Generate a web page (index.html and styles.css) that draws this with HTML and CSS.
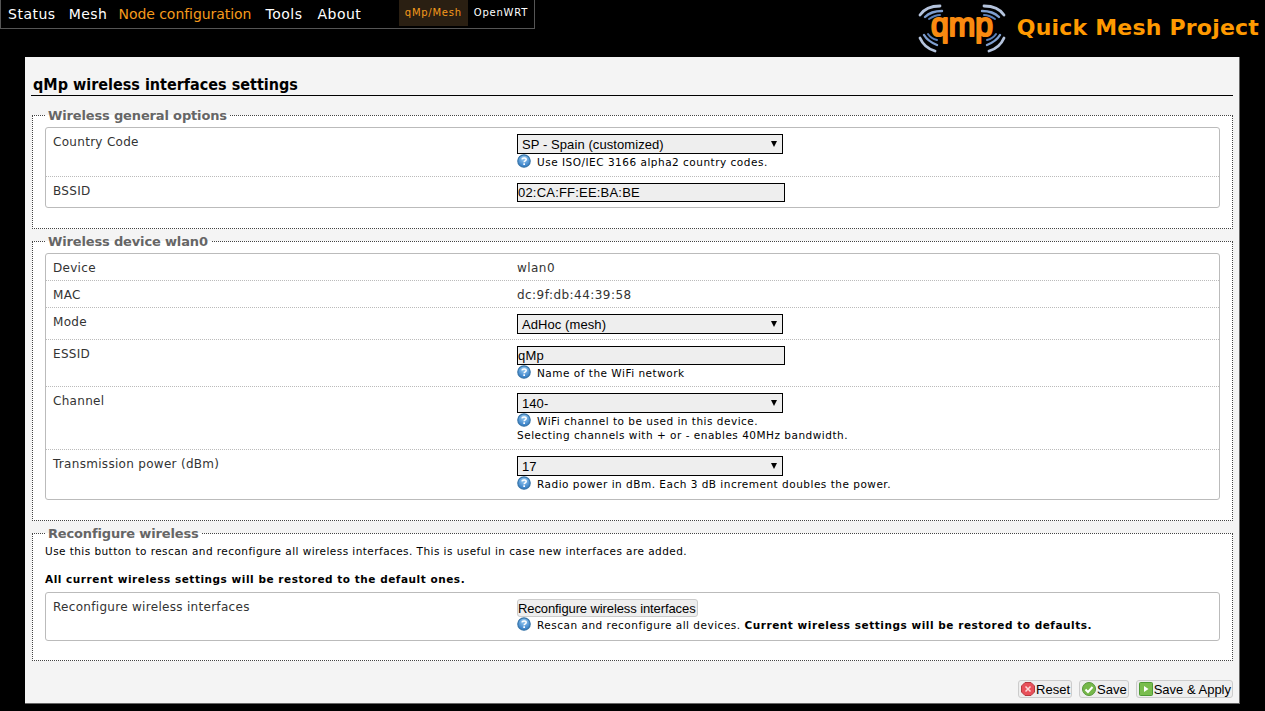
FILE: index.html
```html
<!DOCTYPE html>
<html lang="en">
<head>
<meta charset="utf-8">
<title>qMp wireless interfaces settings</title>
<link rel="stylesheet" href="styles.css">
</head>
<body>
<svg class="defs" width="0" height="0" aria-hidden="true">
  <defs>
    <radialGradient id="helpg" cx="50%" cy="30%" r="70%"><stop offset="0" stop-color="#9ccdf2"/><stop offset="1" stop-color="#2c78c4"/></radialGradient>
    <symbol id="help" viewBox="0 0 14 14">
      <circle cx="7" cy="7" r="6.2" fill="url(#helpg)" stroke="#3a76a8" stroke-width="1.2"/>
      <path d="M4.900 5.400C5.200 3.700 9.200 3.600 9.200 5.600 9.200 6.900 7.100 6.800 7.100 8.300" fill="none" stroke="#fff" stroke-width="1.5"/>
      <rect x="6.300" y="9.300" width="1.700" height="1.700" fill="#fff"/>
    </symbol>
  </defs>
</svg>
<header class="top">
  <nav class="menu">
    <ul class="menu-main">
      <li>Status</li><li>Mesh</li><li class="on">Node configuration</li><li>Tools</li><li>About</li>
    </ul>
    <ul class="menu-mode">
      <li class="on">qMp/Mesh</li><li>OpenWRT</li>
    </ul>
  </nav>
  <div class="brand">
    <svg class="logo" width="100" height="54" viewBox="0 0 100 54" aria-hidden="true">
      <g fill="none" stroke-linecap="round">
        <path d="M8 14C12 8 19 5 28 5" stroke="#b4c3dc" stroke-width="2.800"/>
        <path d="M13 16C17 12 23 10 30 10" stroke="#7f9fd0" stroke-width="2.400"/>
        <path d="M17 18C20 16 24 14 28 14" stroke="#5a7fb8" stroke-width="2"/>
        <path d="M8 37C11 44 16 48 23 50" stroke="#b4c3dc" stroke-width="2.800"/>
        <path d="M12 34C15 39 20 42 25 44" stroke="#7f9fd0" stroke-width="2.400"/>
        <path d="M16 33C18 36 21 38 25 39" stroke="#5a7fb8" stroke-width="2"/>
        <path d="M92 14C88 8 81 5 72 5" stroke="#b4c3dc" stroke-width="2.800"/>
        <path d="M87 16C83 12 77 10 70 10" stroke="#7f9fd0" stroke-width="2.400"/>
        <path d="M83 18C80 16 76 14 72 14" stroke="#5a7fb8" stroke-width="2"/>
        <path d="M92 37C89 44 84 48 77 50" stroke="#b4c3dc" stroke-width="2.800"/>
        <path d="M88 34C85 39 80 42 75 44" stroke="#7f9fd0" stroke-width="2.400"/>
        <path d="M84 33C82 36 79 38 75 39" stroke="#5a7fb8" stroke-width="2"/>
      </g>
      <text x="19" y="35" textLength="62" lengthAdjust="spacingAndGlyphs" class="logo-text">qmp</text>
    </svg>
    <span class="brand-name">Quick Mesh Project</span>
  </div>
</header>

<main class="page">
  <h2 class="title">qMp wireless interfaces settings</h2>

  <fieldset class="group">
    <legend>Wireless general options</legend>
    <div class="rows">
      <div class="row">
        <div class="label">Country Code</div>
        <div class="field">
          <div class="select"><span>SP - Spain (customized)</span><i class="arrow"></i></div>
          <p class="hint"><svg class="help"><use href="#help"/></svg>Use ISO/IEC 3166 alpha2 country codes.</p>
        </div>
      </div>
      <div class="row">
        <div class="label">BSSID</div>
        <div class="field"><div class="input">02:CA:FF:EE:BA:BE</div></div>
      </div>
    </div>
  </fieldset>

  <fieldset class="group">
    <legend>Wireless device wlan0</legend>
    <div class="rows">
      <div class="row plain"><div class="label">Device</div><div class="field value">wlan0</div></div>
      <div class="row plain"><div class="label">MAC</div><div class="field value">dc:9f:db:44:39:58</div></div>
      <div class="row">
        <div class="label">Mode</div>
        <div class="field"><div class="select"><span>AdHoc (mesh)</span><i class="arrow"></i></div></div>
      </div>
      <div class="row">
        <div class="label">ESSID</div>
        <div class="field">
          <div class="input">qMp</div>
          <p class="hint"><svg class="help"><use href="#help"/></svg>Name of the WiFi network</p>
        </div>
      </div>
      <div class="row">
        <div class="label">Channel</div>
        <div class="field">
          <div class="select"><span>140-</span><i class="arrow"></i></div>
          <p class="hint"><svg class="help"><use href="#help"/></svg>WiFi channel to be used in this device.<br>Selecting channels with + or - enables 40MHz bandwidth.</p>
        </div>
      </div>
      <div class="row">
        <div class="label">Transmission power (dBm)</div>
        <div class="field">
          <div class="select"><span>17</span><i class="arrow"></i></div>
          <p class="hint"><svg class="help"><use href="#help"/></svg>Radio power in dBm. Each 3 dB increment doubles the power.</p>
        </div>
      </div>
    </div>
  </fieldset>

  <fieldset class="group">
    <legend>Reconfigure wireless</legend>
    <p class="desc">Use this button to rescan and reconfigure all wireless interfaces. This is useful in case new interfaces are added.<br><br><b>All current wireless settings will be restored to the default ones.</b></p>
    <div class="rows">
      <div class="row">
        <div class="label">Reconfigure wireless interfaces</div>
        <div class="field">
          <button class="btn wide" type="button">Reconfigure wireless interfaces</button>
          <p class="hint"><svg class="help"><use href="#help"/></svg>Rescan and reconfigure all devices. <b>Current wireless settings will be restored to defaults.</b></p>
        </div>
      </div>
    </div>
  </fieldset>

  <div class="actions">
    <button class="btn" type="button"><svg class="ico" viewBox="0 0 14 14"><path d="M4 .5h6L13.500 4v6L10 13.500H4L.5 10V4z" fill="#e8505a" stroke="#b53a40"/><path d="M4.500 4.500l5 5m0-5l-5 5" stroke="#fbd8d8" stroke-width="1.500"/></svg>Reset</button>
    <button class="btn" type="button"><svg class="ico" viewBox="0 0 14 14"><circle cx="7" cy="7" r="6.500" fill="#76b84a" stroke="#57953a"/><path d="M3.500 7.500l2.500 2.500 4.500-5" fill="none" stroke="#fff" stroke-width="2"/></svg>Save</button>
    <button class="btn" type="button"><svg class="ico" viewBox="0 0 14 14"><rect x=".5" y=".5" width="13" height="13" rx="1" fill="#79bd4e" stroke="#4f9a35"/><path d="M5 4l4.500 3L5 10z" fill="#fff"/></svg>Save &amp; Apply</button>
  </div>
</main>
</body>
</html>
```
FILE: styles.css
```css
* { box-sizing: border-box; }
html, body { margin: 0; padding: 0; }
body {
  background: #000;
  color: #000;
  font-family: "DejaVu Sans", sans-serif;
  font-size: 11px;
  height: 711px;
  overflow: hidden;
}
.defs { position: absolute; }

.top { display: flex; justify-content: space-between; align-items: flex-start; height: 57px; }
.menu {
  display: flex;
  width: 535px;
  height: 29px;
  border: 1px solid #555;
  border-top: 0;
  padding-left: 7px;
  color: #fff;
}
.menu ul { display: flex; list-style: none; margin: 0; padding: 0; }
.menu-main { font-size: 14px; gap: 13px; line-height: 28px; width: 391px; letter-spacing: .5px; }
.menu-main .on { color: #f59a1c; letter-spacing: -.05px; margin: 0 1px 0 -2px; }
.menu-main li:last-child { margin-left: 2px; }
.menu-mode { font-size: 10px; height: 26px; line-height: 26px; letter-spacing: .75px; }
.menu-mode li { padding: 0 6px; }
.menu-mode .on { background: #2a1f12; color: #f59a1c; }

.brand { display: flex; align-items: center; padding-right: 6px; }
.logo { display: block; margin-right: 5px; }
.logo-text {
  font-family: "Liberation Sans", sans-serif;
  font-size: 34px;
  fill: #f98a10;
  stroke: #f98a10;
  stroke-width: 2.2px;
  stroke-linejoin: round;
}
.brand-name { font-size: 22px; font-weight: bold; color: #f90; letter-spacing: .2px; line-height: 56px; }

.page {
  width: 1215px;
  height: 647px;
  margin-left: 25px;
  background: #f4f4f4;
  border-right: 1px solid #666;
  border-bottom: 1px solid #666;
  padding: 18px 6px 0 6px;
}
.title {
  font-size: 16px;
  font-stretch: condensed;
  font-weight: bold;
  margin: 0 0 12px;
  padding-left: 2px;
  height: 21px;
  line-height: 19px;
  border-bottom: 1px solid #000;
  color: #000;
}
.group {
  margin: 0 0 5px 1px;
  padding: 0 12px 20px;
  background: #fff;
  border: 1px dotted #444;
}
.group:last-of-type { padding-bottom: 19px; margin-bottom: 6px; }
.group legend {
  margin-left: 0;
  padding: 1px 3px 0;
  font-size: 13px;
  font-weight: bold;
  line-height: 13px;
  color: #666;
  letter-spacing: -.15px;
}
.rows {
  margin-top: 5px;
  background: #fff;
  border: 1px solid #bbb;
  border-radius: 3px;
}
.row {
  display: flex;
  padding: 6px 7px 5px;
  border-bottom: 1px dotted #bbb;
  font-size: 12px;
  line-height: 14px;
  color: #333;
}
.row:last-child { border-bottom: 0; }
.row.plain { padding: 6px 7px; }
.label { width: 464px; flex: none; padding-top: 1px; margin-bottom: -1px; color: #333; letter-spacing: .3px; }
.field { flex: 1; min-width: 0; letter-spacing: .45px; }
.value { padding-top: 1px; margin-bottom: -1px; }

.select {
  display: flex;
  justify-content: space-between;
  align-items: center;
  width: 266px;
  height: 20px;
  padding: 0 3px 0 4px;
  background: #eee;
  border: 1px solid #000;
  color: #000;
  font: 13px "Liberation Sans", sans-serif;
  letter-spacing: .08px;
}
.arrow {
  width: 0;
  height: 0;
  margin-right: 2px;
  border-left: 3.5px solid transparent;
  border-right: 3.5px solid transparent;
  border-top: 6px solid #000;
}
.input {
  width: 268px;
  height: 19px;
  background: #eee;
  border: 1px solid #000;
  color: #000;
  font: 13px/17px "Liberation Sans", sans-serif;
  letter-spacing: .2px;
}
.hint {
  margin: 1px 0 2px;
  font-size: 10.5px;
  line-height: 14px;
  color: #000;
  letter-spacing: .5px;
}
.hint b, .desc b { letter-spacing: .53px; }
.input + .hint { margin-bottom: 1px; }
.row:last-child .hint { margin-bottom: 3px; }
.help { display: inline-block; width: 14px; height: 14px; margin: -1px 6px 0 0; vertical-align: -2px; }

.desc {
  margin: 4px 0 0;
  font-size: 10.5px;
  line-height: 14px;
  color: #000;
  letter-spacing: .44px;
}
.desc + .rows { margin-top: 6px; }

.btn {
  display: inline-flex;
  align-items: center;
  height: 18px;
  padding: 0 1px 0 2px;
  background: #eee;
  border: 1px solid #ccc;
  border-radius: 3px;
  color: #000;
  font: 13px "Liberation Sans", sans-serif;
  letter-spacing: 0;
}
.btn.wide { padding-left: 0; letter-spacing: -.1px; }
.ico { width: 14px; height: 14px; margin-right: 1px; }
.actions { display: flex; justify-content: flex-end; gap: 7px; padding-top: 13px; }
```
